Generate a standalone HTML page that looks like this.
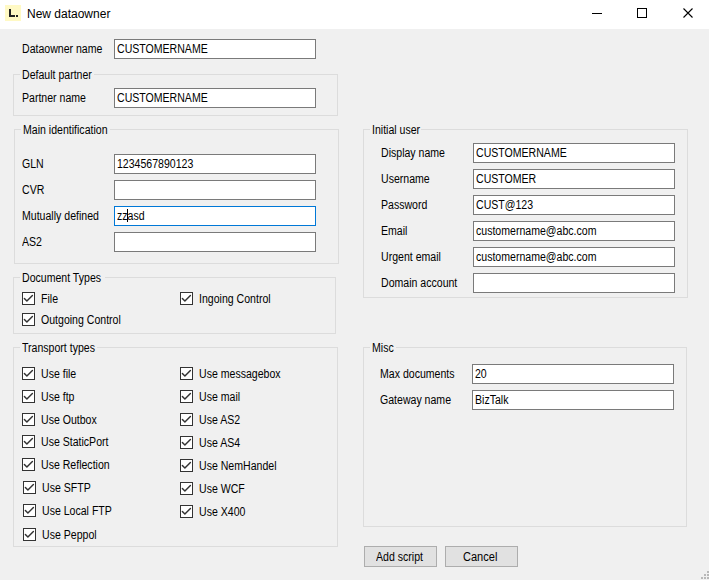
<!DOCTYPE html>
<html><head><meta charset="utf-8"><style>
html,body{margin:0;padding:0}
body{width:709px;height:580px;background:#f0f0f0;position:relative;overflow:hidden;font-family:"Liberation Sans",sans-serif;font-size:12px;color:#000}
.a{position:absolute}
.t{position:absolute;line-height:12px;white-space:nowrap;transform:scaleX(.88);transform-origin:0 0}
.tb{position:absolute;box-sizing:border-box;width:202px;height:20px;border:1px solid #7a7a7a;background:#fff}
.g{position:absolute;box-sizing:border-box;border:1px solid #dcdcdc}
.gc{position:absolute;background:#f0f0f0;height:3px}
.cb{position:absolute;width:13px;height:13px;box-sizing:border-box;border:1px solid #333;background:#fff}
.cb svg{position:absolute;left:-1px;top:-1px}
.btn{position:absolute;box-sizing:border-box;width:73px;height:21px;border:1px solid #adadad;background:#e1e1e1}
</style></head><body>
<!-- title bar -->
<div class="a" style="left:0;top:0;width:709px;height:29px;background:#fff"></div>
<div class="a" style="left:5px;top:5px;width:16px;height:16px;background:#fff9c4"></div>
<div class="a" style="left:9px;top:9px;width:2px;height:8px;background:#222"></div>
<div class="a" style="left:9px;top:15px;width:6px;height:2px;background:#222"></div>
<div class="a" style="left:16px;top:15px;width:2px;height:2px;background:#222"></div>
<div class="t" style="left:27px;top:8px;transform:none">New dataowner</div>
<div class="a" style="left:592px;top:13px;width:10px;height:1px;background:#000"></div>
<div class="a" style="left:637px;top:8px;width:10px;height:10px;box-sizing:border-box;border:1px solid #000"></div>
<svg class="a" style="left:683px;top:8px" width="10" height="10" viewBox="0 0 10 10"><path d="M0.5 0.5L9.5 9.5M9.5 0.5L0.5 9.5" stroke="#000" stroke-width="1.1" fill="none"/></svg>

<!-- Dataowner name -->
<div class="t" style="left:22px;top:43px">Dataowner name</div>
<div class="tb" style="left:114px;top:39px"></div>
<div class="t" style="left:117px;top:43px">CUSTOMERNAME</div>

<!-- Default partner -->
<div class="g" style="left:13px;top:74px;width:325px;height:42px"></div>
<div class="gc" style="left:20px;top:73px;width:74px"></div>
<div class="t" style="left:22px;top:69px">Default partner</div>
<div class="t" style="left:22px;top:92px">Partner name</div>
<div class="tb" style="left:114px;top:88px"></div>
<div class="t" style="left:117px;top:92px">CUSTOMERNAME</div>

<!-- Main identification -->
<div class="g" style="left:14px;top:129px;width:325px;height:135px"></div>
<div class="gc" style="left:21px;top:128px;width:89px"></div>
<div class="t" style="left:23px;top:124px">Main identification</div>
<div class="t" style="left:22px;top:158px">GLN</div>
<div class="tb" style="left:114px;top:154px"></div>
<div class="t" style="left:117px;top:158px">1234567890123</div>
<div class="t" style="left:22px;top:184px">CVR</div>
<div class="tb" style="left:114px;top:180px"></div>
<div class="t" style="left:22px;top:210px">Mutually defined</div>
<div class="tb" style="left:114px;top:206px;border-color:#0078d7"></div>
<div class="t" style="left:117px;top:210px">zzasd</div>
<div class="a" style="left:127px;top:209px;width:1px;height:13px;background:#000"></div>
<div class="t" style="left:22px;top:236px">AS2</div>
<div class="tb" style="left:114px;top:232px"></div>

<!-- Document Types -->
<div class="g" style="left:13px;top:277px;width:323px;height:57px"></div>
<div class="gc" style="left:20px;top:276px;width:85px"></div>
<div class="t" style="left:22px;top:272px">Document Types</div>
<div class="cb" style="left:22px;top:292px"><svg width="13" height="13" viewBox="0 0 13 13"><path d="M2.4 6.5L4.9 9.1L10.4 3.6" stroke="#333" stroke-width="1.45" stroke-linecap="round" stroke-linejoin="round" fill="none"/></svg></div><div class="t" style="left:41px;top:293px">File</div>
<div class="cb" style="left:180px;top:292px"><svg width="13" height="13" viewBox="0 0 13 13"><path d="M2.4 6.5L4.9 9.1L10.4 3.6" stroke="#333" stroke-width="1.45" stroke-linecap="round" stroke-linejoin="round" fill="none"/></svg></div><div class="t" style="left:199px;top:293px">Ingoing Control</div>
<div class="cb" style="left:22px;top:313px"><svg width="13" height="13" viewBox="0 0 13 13"><path d="M2.4 6.5L4.9 9.1L10.4 3.6" stroke="#333" stroke-width="1.45" stroke-linecap="round" stroke-linejoin="round" fill="none"/></svg></div><div class="t" style="left:41px;top:314px">Outgoing Control</div>
<div class="g" style="left:13px;top:347px;width:325px;height:200px"></div>
<div class="gc" style="left:20px;top:346px;width:77px"></div>
<div class="t" style="left:22px;top:342px">Transport types</div>
<div class="cb" style="left:22px;top:367px"><svg width="13" height="13" viewBox="0 0 13 13"><path d="M2.4 6.5L4.9 9.1L10.4 3.6" stroke="#333" stroke-width="1.45" stroke-linecap="round" stroke-linejoin="round" fill="none"/></svg></div><div class="t" style="left:41px;top:368px">Use file</div>
<div class="cb" style="left:22px;top:390px"><svg width="13" height="13" viewBox="0 0 13 13"><path d="M2.4 6.5L4.9 9.1L10.4 3.6" stroke="#333" stroke-width="1.45" stroke-linecap="round" stroke-linejoin="round" fill="none"/></svg></div><div class="t" style="left:41px;top:391px">Use ftp</div>
<div class="cb" style="left:22px;top:413px"><svg width="13" height="13" viewBox="0 0 13 13"><path d="M2.4 6.5L4.9 9.1L10.4 3.6" stroke="#333" stroke-width="1.45" stroke-linecap="round" stroke-linejoin="round" fill="none"/></svg></div><div class="t" style="left:41px;top:414px">Use Outbox</div>
<div class="cb" style="left:22px;top:435px"><svg width="13" height="13" viewBox="0 0 13 13"><path d="M2.4 6.5L4.9 9.1L10.4 3.6" stroke="#333" stroke-width="1.45" stroke-linecap="round" stroke-linejoin="round" fill="none"/></svg></div><div class="t" style="left:41px;top:436px">Use StaticPort</div>
<div class="cb" style="left:22px;top:458px"><svg width="13" height="13" viewBox="0 0 13 13"><path d="M2.4 6.5L4.9 9.1L10.4 3.6" stroke="#333" stroke-width="1.45" stroke-linecap="round" stroke-linejoin="round" fill="none"/></svg></div><div class="t" style="left:41px;top:459px">Use Reflection</div>
<div class="cb" style="left:23px;top:481px"><svg width="13" height="13" viewBox="0 0 13 13"><path d="M2.4 6.5L4.9 9.1L10.4 3.6" stroke="#333" stroke-width="1.45" stroke-linecap="round" stroke-linejoin="round" fill="none"/></svg></div><div class="t" style="left:42px;top:482px">Use SFTP</div>
<div class="cb" style="left:23px;top:504px"><svg width="13" height="13" viewBox="0 0 13 13"><path d="M2.4 6.5L4.9 9.1L10.4 3.6" stroke="#333" stroke-width="1.45" stroke-linecap="round" stroke-linejoin="round" fill="none"/></svg></div><div class="t" style="left:42px;top:505px">Use Local FTP</div>
<div class="cb" style="left:23px;top:528px"><svg width="13" height="13" viewBox="0 0 13 13"><path d="M2.4 6.5L4.9 9.1L10.4 3.6" stroke="#333" stroke-width="1.45" stroke-linecap="round" stroke-linejoin="round" fill="none"/></svg></div><div class="t" style="left:42px;top:529px">Use Peppol</div>
<div class="cb" style="left:180px;top:367px"><svg width="13" height="13" viewBox="0 0 13 13"><path d="M2.4 6.5L4.9 9.1L10.4 3.6" stroke="#333" stroke-width="1.45" stroke-linecap="round" stroke-linejoin="round" fill="none"/></svg></div><div class="t" style="left:199px;top:368px">Use messagebox</div>
<div class="cb" style="left:180px;top:390px"><svg width="13" height="13" viewBox="0 0 13 13"><path d="M2.4 6.5L4.9 9.1L10.4 3.6" stroke="#333" stroke-width="1.45" stroke-linecap="round" stroke-linejoin="round" fill="none"/></svg></div><div class="t" style="left:199px;top:391px">Use mail</div>
<div class="cb" style="left:180px;top:413px"><svg width="13" height="13" viewBox="0 0 13 13"><path d="M2.4 6.5L4.9 9.1L10.4 3.6" stroke="#333" stroke-width="1.45" stroke-linecap="round" stroke-linejoin="round" fill="none"/></svg></div><div class="t" style="left:199px;top:414px">Use AS2</div>
<div class="cb" style="left:180px;top:436px"><svg width="13" height="13" viewBox="0 0 13 13"><path d="M2.4 6.5L4.9 9.1L10.4 3.6" stroke="#333" stroke-width="1.45" stroke-linecap="round" stroke-linejoin="round" fill="none"/></svg></div><div class="t" style="left:199px;top:437px">Use AS4</div>
<div class="cb" style="left:180px;top:459px"><svg width="13" height="13" viewBox="0 0 13 13"><path d="M2.4 6.5L4.9 9.1L10.4 3.6" stroke="#333" stroke-width="1.45" stroke-linecap="round" stroke-linejoin="round" fill="none"/></svg></div><div class="t" style="left:199px;top:460px">Use NemHandel</div>
<div class="cb" style="left:180px;top:482px"><svg width="13" height="13" viewBox="0 0 13 13"><path d="M2.4 6.5L4.9 9.1L10.4 3.6" stroke="#333" stroke-width="1.45" stroke-linecap="round" stroke-linejoin="round" fill="none"/></svg></div><div class="t" style="left:199px;top:483px">Use WCF</div>
<div class="cb" style="left:180px;top:505px"><svg width="13" height="13" viewBox="0 0 13 13"><path d="M2.4 6.5L4.9 9.1L10.4 3.6" stroke="#333" stroke-width="1.45" stroke-linecap="round" stroke-linejoin="round" fill="none"/></svg></div><div class="t" style="left:199px;top:506px">Use X400</div>
<div class="g" style="left:363px;top:129px;width:325px;height:169px"></div>
<div class="gc" style="left:370px;top:128px;width:51px"></div>
<div class="t" style="left:372px;top:124px">Initial user</div>
<div class="t" style="left:381px;top:147px">Display name</div><div class="tb" style="left:473px;top:143px"></div><div class="t" style="left:476px;top:147px">CUSTOMERNAME</div>
<div class="t" style="left:381px;top:173px">Username</div><div class="tb" style="left:473px;top:169px"></div><div class="t" style="left:476px;top:173px">CUSTOMER</div>
<div class="t" style="left:381px;top:199px">Password</div><div class="tb" style="left:473px;top:195px"></div><div class="t" style="left:476px;top:199px">CUST@123</div>
<div class="t" style="left:381px;top:225px">Email</div><div class="tb" style="left:473px;top:221px"></div><div class="t" style="left:476px;top:225px">customername@abc.com</div>
<div class="t" style="left:381px;top:251px">Urgent email</div><div class="tb" style="left:473px;top:247px"></div><div class="t" style="left:476px;top:251px">customername@abc.com</div>
<div class="t" style="left:381px;top:277px">Domain account</div><div class="tb" style="left:473px;top:273px"></div>
<div class="g" style="left:363px;top:347px;width:324px;height:180px"></div>
<div class="gc" style="left:370px;top:346px;width:26px"></div>
<div class="t" style="left:372px;top:342px">Misc</div>
<div class="t" style="left:380px;top:368px">Max documents</div><div class="tb" style="left:472px;top:364px"></div><div class="t" style="left:475px;top:368px">20</div>
<div class="t" style="left:380px;top:394px">Gateway name</div><div class="tb" style="left:472px;top:390px"></div><div class="t" style="left:475px;top:394px">BizTalk</div>
<div class="btn" style="left:364px;top:546px"></div><div class="t" style="left:376px;top:551px">Add script</div>
<div class="btn" style="left:445px;top:546px"></div><div class="t" style="left:463px;top:551px;transform:scaleX(.92)">Cancel</div>
<div class="a" style="left:707px;top:571px;width:2px;height:2px;background:#b8b8b8"></div><div class="a" style="left:704px;top:574px;width:2px;height:2px;background:#b8b8b8"></div><div class="a" style="left:707px;top:574px;width:2px;height:2px;background:#b8b8b8"></div><div class="a" style="left:701px;top:577px;width:2px;height:2px;background:#b8b8b8"></div><div class="a" style="left:704px;top:577px;width:2px;height:2px;background:#b8b8b8"></div><div class="a" style="left:707px;top:577px;width:2px;height:2px;background:#b8b8b8"></div>
</body></html>
